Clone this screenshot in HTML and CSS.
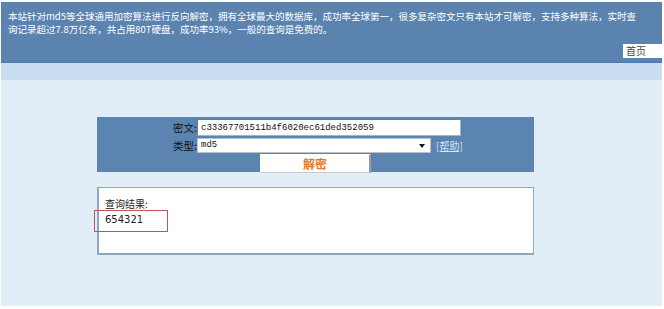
FILE: index.html
```html
<!DOCTYPE html>
<html lang="zh-CN">
<head>
    <meta charset="UTF-8">
    <meta name="viewport" content="width=device-width, initial-scale=1.0">
    <title>MD5解密</title>
    <link rel="stylesheet" href="styles.css">
</head>
<body>
<div class="page">

    <div class="header">
        <p class="intro">本站针对md5等全球通用加密算法进行反向解密，拥有全球最大的数据库，成功率全球第一，很多复杂密文只有本站才可解密，支持多种算法，实时查询记录超过7.8万亿条，共占用80T硬盘，成功率93%，一般的查询是免费的。</p>
        <div class="nav">
            <a class="nav-tab" href="#">首页</a>
        </div>
    </div>
    <div class="band"></div>

    <div class="main">
        <form class="decrypt" onsubmit="return false;">
            <div class="row">
                <label>密文:</label>
                <input class="cipher" type="text" value="c33367701511b4f6020ec61ded352059">
            </div>
            <div class="row">
                <label>类型:</label>
                <div class="select">md5<span class="arrow"></span></div>
                <a class="help" href="#">[帮助]</a>
            </div>
            <div class="row">
                <button class="submit">解密</button>
            </div>
        </form>

        <div class="result">
            <div class="result-title">查询结果:</div>
            <div class="result-value">654321</div>
            <div class="mark"></div>
        </div>
    </div>

</div>
</body>
</html>
```

FILE: styles.css
```css
html, body {
    margin: 0;
    background-color: #fff;
    overflow: hidden;
}
body {
    font-family: "Noto Sans CJK SC", "Noto Sans", sans-serif;
    font-size: 10px;
}
.page {
    margin: 2px 2px 0 1px;
    height: 304px;
    display: flex;
    flex-direction: column;
}
.header {
    background-color: #5a83b0;
    border-bottom: 1px solid #4f78a6;
    padding-top: 8px;
    box-sizing: border-box;
    height: 61px;
}
.intro {
    margin: 0 0 0 7px;
    width: 628px;
    color: #fff;
    font-size: 9.5px;
    line-height: 13px;
}
.nav {
    margin-top: 8px;
    padding-left: 622px;
    display: flex;
}
.nav-tab {
    flex: 1;
    background-color: #fff;
    color: #444;
    height: 14px;
    line-height: 14px;
    padding-left: 3px;
    font-size: 10px;
    text-decoration: none;
}
.band {
    height: 17px;
    background-color: #c9def0;
}
.main {
    flex: 1;
    background-color: #e1eef7;
    padding: 37px 0 0 96px;
}
.decrypt {
    width: 437px;
    height: 55px;
    box-sizing: border-box;
    background-color: #5b84b1;
    padding-top: 2px;
    margin: 0;
}
.row {
    display: flex;
    align-items: center;
    margin-bottom: 2px;
}
.row label {
    width: 100px;
    text-align: right;
    font-size: 10.5px;
    color: #111;
    line-height: 15px;
}
.cipher {
    width: 264px;
    height: 17px;
    box-sizing: border-box;
    margin: 0;
    padding: 0 3px;
    border: 1px solid #a9b3bd;
    border-top-color: #6f7b87;
    border-left-color: #6f7b87;
    font-family: "Liberation Mono", monospace;
    font-size: 9px;
    color: #111;
    outline: none;
}
.select {
    position: relative;
    width: 234px;
    height: 15px;
    box-sizing: border-box;
    background-color: #fff;
    border: 1px solid #b8c2cc;
    padding-left: 3px;
    font-family: "Liberation Mono", monospace;
    font-size: 9px;
    line-height: 13px;
    color: #111;
}
.arrow {
    position: absolute;
    right: 5px;
    top: 5px;
    border-left: 3px solid transparent;
    border-right: 3px solid transparent;
    border-top: 4px solid #111;
}
.help {
    margin-left: 5px;
    color: #d2e4f4;
    font-size: 10px;
}
.submit {
    margin-left: 163px;
    margin-top: -1px;
    width: 111px;
    height: 19px;
    background-color: #fff;
    border: 1px solid #fff;
    border-right: 2px solid #9a9a9a;
    border-bottom: 1px solid #c8c8c8;
    color: #e8772a;
    font-family: "Noto Sans CJK SC", sans-serif;
    font-weight: bold;
    font-size: 12px;
    line-height: 15px;
    padding: 0;
    cursor: pointer;
}
.result {
    position: relative;
    margin-top: 15px;
    width: 437px;
    height: 68px;
    box-sizing: border-box;
    background-color: #fff;
    border: 1px solid #8fa8c2;
    border-left-width: 2px;
    border-bottom-width: 2px;
    padding: 8px 0 0 6px;
}
.result-title {
    font-size: 10px;
    line-height: 15px;
    color: #222;
}
.result-value {
    font-family: "DejaVu Sans", sans-serif;
    font-size: 10px;
    line-height: 17px;
    color: #222;
}
.mark {
    position: absolute;
    left: -5px;
    top: 22px;
    width: 74px;
    height: 22px;
    box-sizing: border-box;
    border: 1px solid #c6505c;
}
```
